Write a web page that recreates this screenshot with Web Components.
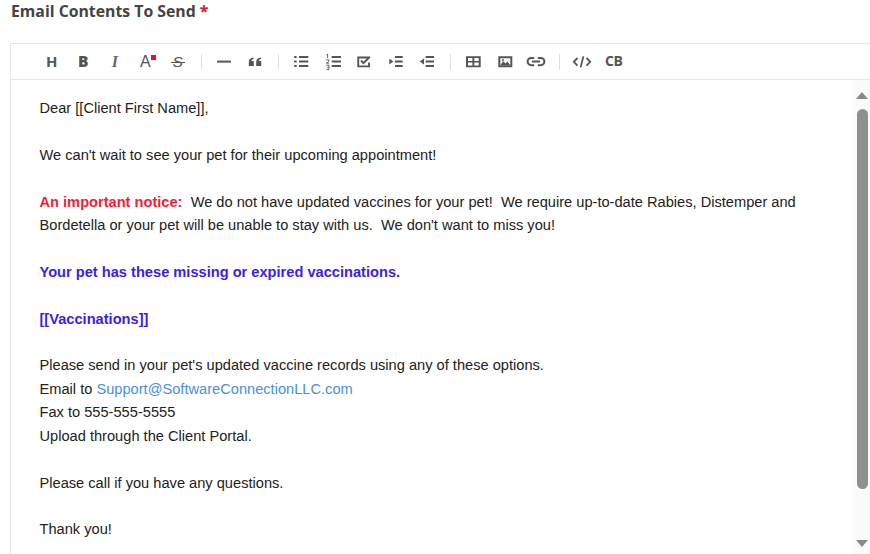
<!DOCTYPE html>
<html>
<head>
<meta charset="utf-8">
<style>
  html, body { margin: 0; padding: 0; height: 554px; overflow: hidden; background: #fff; }
</style>
</head>
<body>
<email-field label="Email Contents To Send">
  <p>Dear [[Client First Name]],</p>
  <p><br></p>
  <p>We can't wait to see your pet for their upcoming appointment!</p>
  <p><br></p>
  <p><b class="red">An important notice:</b>&nbsp; We do not have updated vaccines for your pet!&nbsp; We require up-to-date Rabies, Distemper and Bordetella or your pet will be unable to stay with us.&nbsp; We don't want to miss you!</p>
  <p><br></p>
  <p><b class="blue">Your pet has these missing or expired vaccinations.</b></p>
  <p><br></p>
  <p><b class="blue">[[Vaccinations]]</b></p>
  <p><br></p>
  <p>Please send in your pet's updated vaccine records using any of these options.</p>
  <p>Email to <a>Support@SoftwareConnectionLLC.com</a></p>
  <p>Fax to 555-555-5555</p>
  <p>Upload through the Client Portal.</p>
  <p><br></p>
  <p>Please call if you have any questions.</p>
  <p><br></p>
  <p>Thank you!</p>
  <p><br></p>
</email-field>

<script>
  /////////////////////////////////////////////////////////
  // Toolbar button, icon comes from the slot
  /////////////////////////////////////////////////////////
  class ToolButton extends HTMLElement {
    constructor() {
      super();
      this.attachShadow({ mode: 'open' });
      this.shadowRoot.innerHTML = `
        <style>
          :host {
            display: flex;
            align-items: center;
            justify-content: center;
            width: 31.5px;
            height: 35px;
            flex: none;
            color: #555;
            font: 700 15px "Open Sans", sans-serif;
          }
          ::slotted(svg) { display: block; }
        </style>
        <slot></slot>
      `;
    }
  }
  customElements.define('tool-button', ToolButton);

  class EditorToolbar extends HTMLElement {
    constructor() {
      super();
      this.attachShadow({ mode: 'open' });
      const g = 'fill="#555"';
      const svg = (inner) => `<svg width="18" height="18" viewBox="0 0 18 18">${inner}</svg>`;
      const lines = (x1, x2) => `<path ${g} d="M${x1} 3h${x2 - x1}v2H${x1}zM${x1} 7.5h${x2 - x1}v2H${x1}zM${x1} 12.1h${x2 - x1}v2H${x1}z"/>`;
      this.shadowRoot.innerHTML = `
        <style>
          :host {
            display: flex;
            align-items: center;
            height: 35px;
            padding-left: 25px;
            border-bottom: 1px solid #e6e6e6;
          }
          span { line-height: 18px; }
          .sep { width: 1px; height: 16px; background: #e0e0e0; margin: 0 6.5px 0 7px; flex: none; }
          .h { font: 700 15px/18px "Open Sans", sans-serif; padding-bottom: 2px; }
          .b { font: 800 15.5px/18px "Open Sans", sans-serif; padding-bottom: 2px; }
          .i { font: italic 700 16px/18px "Liberation Serif", serif; color: #666; }
          .a { font: 400 16px/18px "Liberation Sans", sans-serif; position: relative; left: -1px; }
          .a i { position: absolute; right: -5px; top: 2.5px; width: 4.5px; height: 4.5px; background: #e8112d; }
          .s { font: italic 400 15.5px/18px "Liberation Sans", sans-serif; position: relative; }
          .s::after { content: ""; position: absolute; left: -2px; right: -2px; top: 9px; height: 1.2px; background: #555; }
          .cb { font: 700 14px/18px "Open Sans", sans-serif; letter-spacing: -.3px; padding-bottom: 2px; }
        </style>
        <tool-button><span class="h">H</span></tool-button>
        <tool-button><span class="b">B</span></tool-button>
        <tool-button><span class="i">I</span></tool-button>
        <tool-button><span class="a">A<i></i></span></tool-button>
        <tool-button><span class="s">S</span></tool-button>
        <span class="sep"></span>
        <tool-button>${svg(`<rect x="2" y="7.6" width="14" height="2" ${g}/>`)}</tool-button>
        <tool-button>${svg(`<path ${g} d="M2.8 13V8.8C2.8 6.4 4.2 4.9 7.6 4.4v1.7C6.2 6.4 5.5 7 5.4 8h2.4v5zM10.2 13V8.8c0-2.4 1.4-3.9 4.8-4.4v1.7c-1.4.3-2.1.9-2.2 1.9h2.4v5z"/>`)}</tool-button>
        <span class="sep"></span>
        <tool-button>${svg(`<path ${g} d="M2.2 3h2.4v2H2.2zM2.2 7.5h2.4v2H2.2zM2.2 12.1h2.4v2H2.2z"/>${lines(7, 16.3)}`)}</tool-button>
        <tool-button>${svg(`${lines(7.7, 17)}<path fill="none" stroke="#555" stroke-width=".9" d="M3.6 1v4M2.6 1.6h1M2.2 6.8h2.6v1.6L2.4 10.2h2.8M2.2 12.2h2.8v4.2H2.2M3.2 14.3h1.8"/>`)}</tool-button>
        <tool-button>${svg(`<path ${g} d="M2.3 3.5h11.2v1.9H4.2v7h8.9V9.4H15v4.8H2.3z"/><path fill="none" stroke="#555" stroke-width="2" d="M6 7.5l2.5 2.6L14.8 3.8"/>`)}</tool-button>
        <tool-button>${svg(`<path ${g} d="M2.3 5.6l4 2.9-4 2.9z"/>${lines(8, 15.7)}`)}</tool-button>
        <tool-button>${svg(`<path ${g} d="M6 5.6v5.8L1.7 8.5z"/>${lines(7.7, 16)}`)}</tool-button>
        <span class="sep"></span>
        <tool-button>${svg(`<path ${g} fill-rule="evenodd" d="M2 3.2h14.7v11H2zM4 5v3h4.4V5zM10.3 5v3h4.4V5zM4 9.6v3h4.4v-3zM10.3 9.6v3h4.4v-3z"/>`)}</tool-button>
        <tool-button>${svg(`<path ${g} fill-rule="evenodd" d="M2.3 3.2h14v11h-14zM4.3 5.2v7h10v-7z"/><path ${g} d="M4.3 12.2l2.9-4 2.4 2.2 1.7-2 3 3.8z"/><circle cx="7" cy="6.9" r="1" ${g}/>`)}</tool-button>
        <tool-button><svg width="20" height="18" viewBox="0 0 20 18"><path fill="none" stroke="#555" stroke-width="2" d="M8.2 5H5.2a3.6 3.6 0 0 0 0 7.2h3M11.8 5h3a3.6 3.6 0 0 1 0 7.2h-3M6 8.6h8"/></svg></tool-button>
        <span class="sep"></span>
        <tool-button><svg width="20" height="18" viewBox="0 0 20 18"><path fill="none" stroke="#555" stroke-width="1.8" d="M5.5 5L1.8 8.8l3.7 3.8M14.5 5l3.7 3.8-3.7 3.8M11.4 3.4L8.6 14.4"/></svg></tool-button>
        <tool-button><span class="cb">CB</span></tool-button>
      `;
    }
  }
  customElements.define('editor-toolbar', EditorToolbar);

  /////////////////////////////////////////////////////////
  // Fake scrollbar on the right of the editor
  /////////////////////////////////////////////////////////
  class EditorScrollbar extends HTMLElement {
    constructor() {
      super();
      this.attachShadow({ mode: 'open' });
      this.shadowRoot.innerHTML = `
        <style>
          :host {
            display: flex;
            flex-direction: column;
            align-items: center;
            width: 18px;
            flex: none;
            background: #fafafa;
            padding-top: 12px;
            box-sizing: border-box;
            height: 474px;
          }
          .up, .down { width: 0; height: 0; border-left: 6.5px solid transparent; border-right: 6.5px solid transparent; flex: none; }
          .up { border-bottom: 7px solid #8a8a8a; }
          .down { border-top: 7px solid #8a8a8a; }
          .thumb { width: 11px; height: 380px; background: #8f8f8f; border-radius: 6px; margin: 10px 0 51px; flex: none; }
        </style>
        <span class="up"></span>
        <span class="thumb"></span>
        <span class="down"></span>
      `;
    }
  }
  customElements.define('editor-scrollbar', EditorScrollbar);

  /////////////////////////////////////////////////////////
  // Label + editor box, the email body goes in the slot
  /////////////////////////////////////////////////////////
  class EmailField extends HTMLElement {
    constructor() {
      super();
      this.attachShadow({ mode: 'open' });
      this.shadowRoot.innerHTML = `
        <style>
          :host { display: block; width: 870px; height: 554px; overflow: hidden; }
          label {
            display: block;
            height: 43px;
            padding: 1px 0 0 11px;
            box-sizing: border-box;
            font: 700 15.8px/21px "Open Sans", sans-serif;
            color: #444;
          }
          label span { color: #e8112d; }
          .box {
            margin-left: 10px;
            width: 880px;
            border: 1px solid #e6e6e6;
            border-width: 1px 0 0 1px;
          }
          .main { display: flex; width: 860px; height: 474px; overflow: hidden; }
          .text {
            flex: 1;
            min-width: 0;
            box-sizing: border-box;
            padding: 17px 55px 0 28.5px;
            font: 400 14.63px/23.4px "Liberation Sans", sans-serif;
            color: #222;
          }
          ::slotted(p) { margin: 0; }
        </style>
        <label>${this.getAttribute('label')} <span>*</span></label>
        <div class="box">
          <editor-toolbar></editor-toolbar>
          <div class="main">
            <div class="text"><slot></slot></div>
            <editor-scrollbar></editor-scrollbar>
          </div>
        </div>
      `;
    }
  }
  customElements.define('email-field', EmailField);

  // colours of the inline bits, these live in the light DOM
  const s = document.createElement('style');
  s.textContent = `
    .red { color: #fb1a35; }
    .blue { color: #3a1df0; }
    email-field a { color: #4a8fe2; }
  `;
  document.head.appendChild(s);
</script>
</body>
</html>
